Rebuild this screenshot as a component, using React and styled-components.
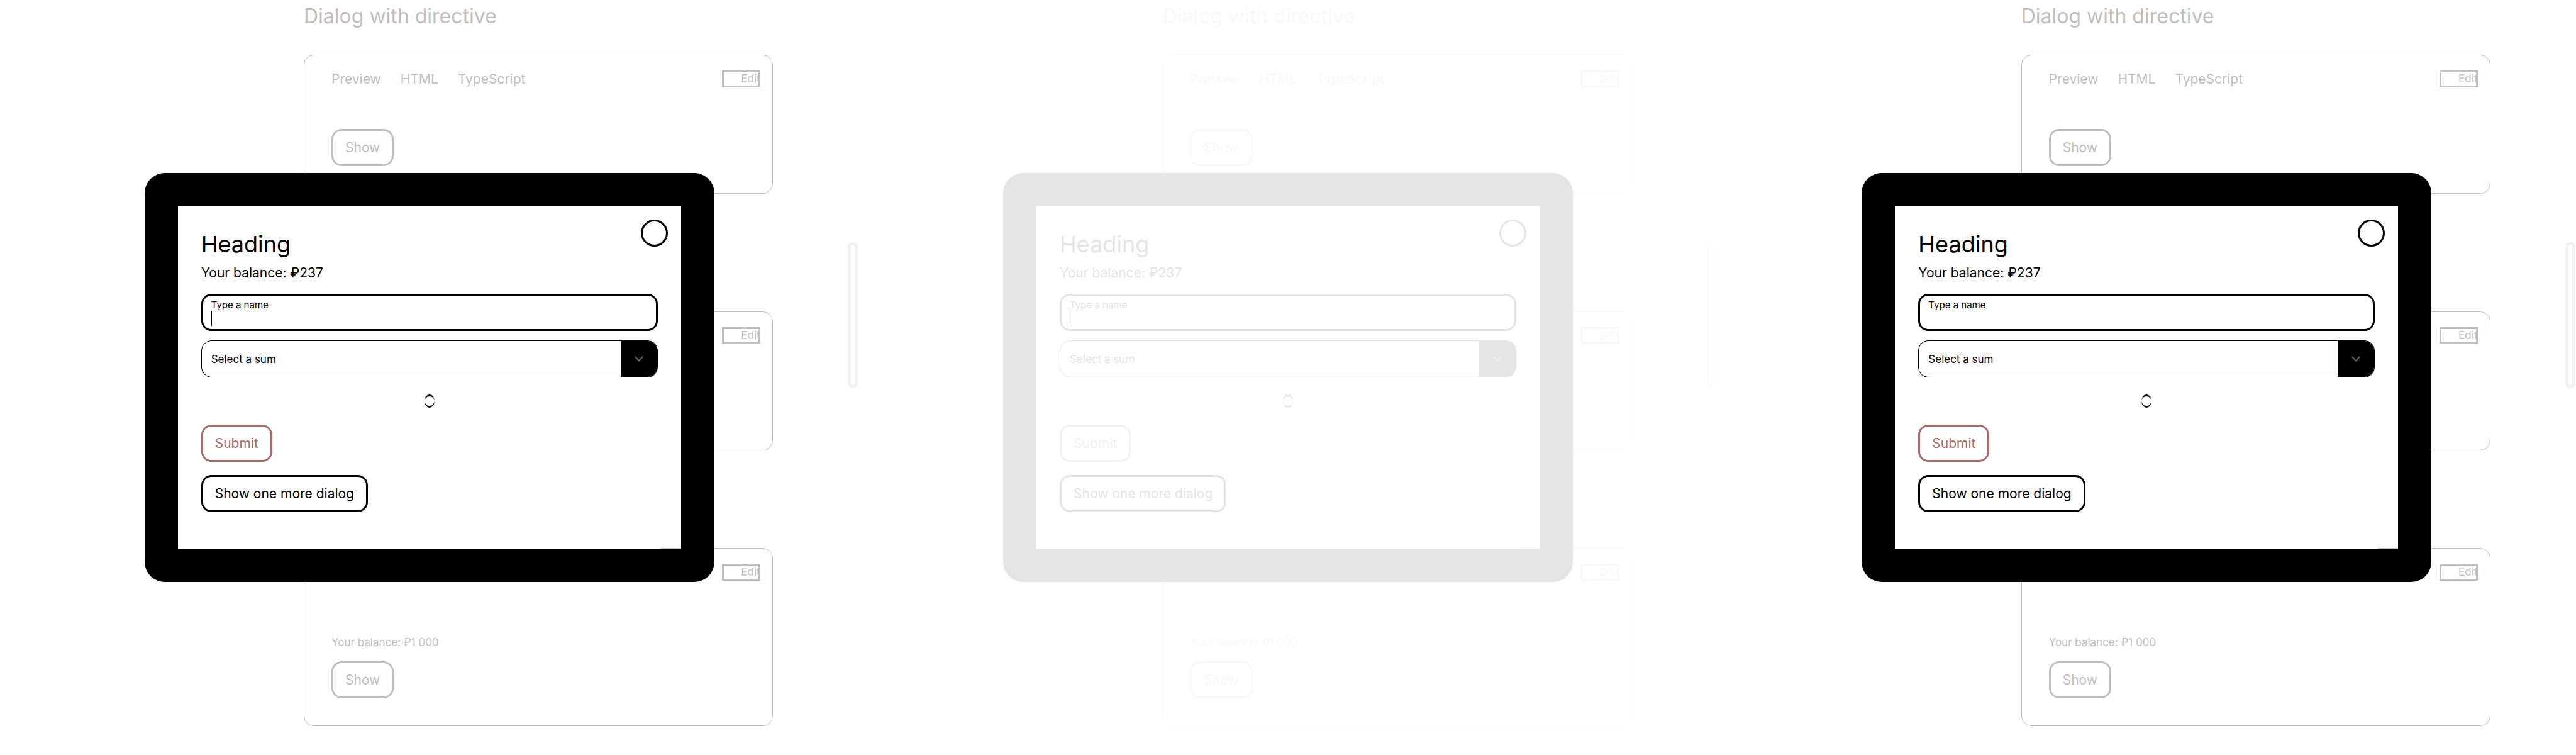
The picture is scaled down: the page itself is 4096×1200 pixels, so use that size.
import React, { useId } from "react";
import styled, { createGlobalStyle, ThemeProvider } from "styled-components";

const solid = {
  ink: "#000000",
  muted: "#bfbfbf",
  danger: "#a66c6c",
  chevron: "#666666",
  thumb: "#f2f2f2",
  caret: "#000000",
};

const faded = {
  ink: "#e5e5e5",
  muted: "#f9f9f9",
  danger: "#f2f2f2",
  chevron: "#efefef",
  thumb: "#fdfdfd",
  caret: "#ff0000",
};

const GlobalStyle = createGlobalStyle`
  *, *::before, *::after { box-sizing: border-box; }
  body {
    margin: 0;
    background: #ffffff;
    font-family: Inter, "Liberation Sans", sans-serif;
  }
  h1, h2, p { margin: 0; font-weight: 400; }
  button, input, select { margin: 0; font-family: inherit; }
`;

const Page = styled.div`
  display: grid;
  grid-template-columns: repeat(3, minmax(0, 1fr));
  min-height: 100vh;
`;

const Panel = styled.section`
  position: relative;
  overflow: hidden;
`;

const Backdrop = styled.div`
  display: flex;
  flex-direction: column;
  padding: 6px 136px 46px 483px;
  color: ${({ theme }) => theme.muted};
`;

const Title = styled.h1`
  margin-bottom: 41px;
  font-size: 32px;
  line-height: 40px;
`;

const Card = styled.article`
  min-height: 221px;
  margin-top: ${({ $gap = 0 }) => $gap}px;
  padding: 24px 19px 43px 43px;
  border: 1px solid ${({ theme }) => theme.muted};
  border-radius: 16px;
`;

const CardHeader = styled.header`
  display: flex;
  justify-content: space-between;
  align-items: flex-start;
  height: 28px;
`;

const Tabs = styled.nav`
  display: flex;
  gap: 31px;
`;

const Tab = styled.a`
  color: inherit;
  font-size: 21px;
  line-height: 28px;
  text-decoration: none;
`;

const EditButton = styled.button`
  width: 61px;
  height: 27px;
  padding: 0 0 0 27px;
  overflow: hidden;
  border: 3px solid currentColor;
  background: none;
  color: inherit;
  font-size: 17px;
  line-height: 21px;
  text-align: left;
`;

const CardBody = styled.div`
  display: flex;
  flex-direction: column;
  align-items: flex-start;
  gap: 18px;
  padding-top: ${({ $top }) => $top}px;
`;

const Note = styled.p`
  font-size: 17px;
  line-height: 24px;
`;

const Button = styled.button`
  height: 59px;
  padding: 0 19px;
  border: 3px solid currentColor;
  border-radius: 16px;
  background: none;
  color: ${({ theme, $tone }) => theme[$tone]};
  font-size: 21px;
  line-height: 28px;
`;

const Overlay = styled.div`
  position: absolute;
  inset: 0;
  display: grid;
  place-items: center;
`;

const Dialog = styled.div`
  position: relative;
  width: 906px;
  max-width: 100%;
  padding: 38px 37px 58px;
  border: 53px solid ${({ theme }) => theme.ink};
  border-radius: 32px;
  background: #ffffff;
  color: ${({ theme }) => theme.ink};
`;

const CloseButton = styled.button`
  position: absolute;
  top: 21px;
  right: 21px;
  width: 43px;
  height: 43px;
  padding: 0;
  border: 3px solid currentColor;
  border-radius: 50%;
  background: none;
  color: inherit;
`;

const CornerEdge = styled.i`
  position: absolute;
  right: 0;
  bottom: 0;
  width: 32px;
  height: 1px;
  background: ${({ theme }) => theme.muted};
`;

const Heading = styled.h2`
  margin-bottom: 10px;
  font-size: 36px;
  line-height: 44px;
`;

const Balance = styled.p`
  margin-bottom: 19px;
  font-size: 21px;
  line-height: 28px;
`;

const Form = styled.form`
  display: flex;
  flex-direction: column;
`;

const TextField = styled.div`
  height: 59px;
  margin-bottom: 15px;
  padding: 6px 13px;
  border: 3px solid currentColor;
  border-radius: 16px;
`;

const FieldLabel = styled.label`
  display: block;
  font-size: 15px;
  line-height: 18px;
`;

const InputRow = styled.div`
  display: flex;
  height: 24px;
`;

const Caret = styled.span`
  flex: none;
  width: 1px;
  background: ${({ theme }) => theme.caret};
`;

const Input = styled.input`
  flex: 1;
  min-width: 0;
  padding: 0;
  border: 0;
  outline: 0;
  background: none;
  color: inherit;
  font-size: 17px;
`;

const SelectField = styled.div`
  display: flex;
  height: 59px;
  overflow: hidden;
  border: 1px solid currentColor;
  border-radius: 16px;
`;

const Select = styled.select`
  flex: 1;
  min-width: 0;
  padding: 0 15px;
  border: 0;
  outline: 0;
  appearance: none;
  background: none;
  color: inherit;
  font-size: 17px;
`;

const Arrow = styled.span`
  display: grid;
  place-items: center;
  width: 58px;
  background: ${({ theme }) => theme.ink};
  color: ${({ theme }) => theme.chevron};
`;

const Loader = styled.div`
  align-self: center;
  width: 16px;
  height: 21px;
  margin: 27px 0;
  border: solid currentColor;
  border-width: 3px 0;
  border-radius: 50%;
`;

const Actions = styled.div`
  display: flex;
  flex-direction: column;
  align-items: flex-start;
  gap: 21px;
`;

const Thumb = styled.div`
  position: absolute;
  top: 384px;
  right: 1px;
  width: 16px;
  height: 233px;
  border: 5px solid ${({ theme }) => theme.thumb};
  border-radius: 8px;
`;

function Example({ gap, tabs = [], children }) {
  return (
    <Card $gap={gap}>
      <CardHeader>
        <Tabs>
          {tabs.map((tab) => (
            <Tab key={tab} href="#">{tab}</Tab>
          ))}
        </Tabs>
        <EditButton type="button">Edit</EditButton>
      </CardHeader>
      {children}
    </Card>
  );
}

function DialogForm({ caret }) {
  const id = useId();
  return (
    <Dialog role="dialog" aria-labelledby={id + "-title"}>
      <CloseButton type="button" aria-label="Close" />
      <Heading id={id + "-title"}>Heading</Heading>
      <Balance>Your balance: ₽237</Balance>
      <Form onSubmit={(event) => event.preventDefault()}>
        <TextField>
          <FieldLabel htmlFor={id + "-name"}>Type a name</FieldLabel>
          <InputRow>
            {caret && <Caret />}
            <Input id={id + "-name"} type="text" />
          </InputRow>
        </TextField>
        <SelectField>
          <Select aria-label="Select a sum">
            <option>Select a sum</option>
          </Select>
          <Arrow>
            <svg width="14" height="10" viewBox="0 0 14 10" fill="none" stroke="currentColor" strokeWidth="2" strokeLinecap="round" strokeLinejoin="round">
              <path d="M1.5 1.5 7 7.5l5.5-6" />
            </svg>
          </Arrow>
        </SelectField>
        <Loader role="status" />
        <Actions>
          <Button $tone="danger">Submit</Button>
          <Button type="button" $tone="ink">Show one more dialog</Button>
        </Actions>
      </Form>
      <CornerEdge />
    </Dialog>
  );
}

function DemoPanel({ palette, caret }) {
  return (
    <ThemeProvider theme={palette}>
      <Panel>
        <Backdrop>
          <Title>Dialog with directive</Title>
          <Example tabs={["Preview", "HTML", "TypeScript"]}>
            <CardBody $top={65}>
              <Button type="button" $tone="muted">Show</Button>
            </CardBody>
          </Example>
          <Example gap={187} />
          <Example gap={155}>
            <CardBody $top={85}>
              <Note>Your balance: ₽1 000</Note>
              <Button type="button" $tone="muted">Show</Button>
            </CardBody>
          </Example>
        </Backdrop>
        <Overlay>
          <DialogForm caret={caret} />
        </Overlay>
        <Thumb />
      </Panel>
    </ThemeProvider>
  );
}

export default function App() {
  return (
    <>
      <GlobalStyle />
      <Page>
        <DemoPanel palette={solid} caret />
        <DemoPanel palette={faded} caret />
        <DemoPanel palette={solid} />
      </Page>
    </>
  );
}
